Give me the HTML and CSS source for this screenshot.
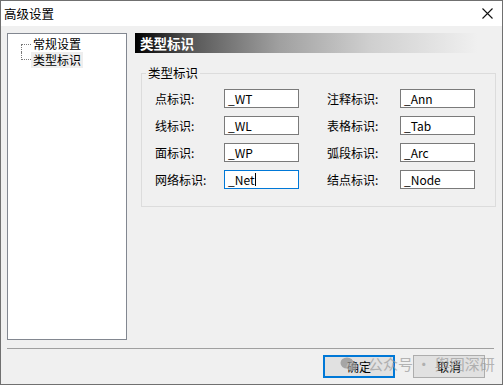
FILE: index.html
```html
<!DOCTYPE html>
<html lang="zh-CN">
<head>
    <meta charset="UTF-8">
    <meta name="viewport" content="width=device-width, initial-scale=1.0">
    <title>高级设置</title>
    <link rel="stylesheet" href="styles.css">
</head>
<body>
    <div class="window">
        <div class="titlebar">
            <span class="title">高级设置</span>
            <svg class="close" width="11" height="11" viewBox="0 0 11 11">
                <path d="M0.5 0.5 L10.5 10.5 M10.5 0.5 L0.5 10.5" stroke="#111" stroke-width="1.1" fill="none"/>
            </svg>
        </div>
        <div class="content">
            <div class="main">
                <div class="tree-panel">
                    <div class="tree">
                        <div class="tree-item">
                            <span class="branch first"></span>
                            <span class="tree-label">常规设置</span>
                        </div>
                        <div class="tree-item">
                            <span class="branch last"></span>
                            <span class="tree-label selected">类型标识</span>
                        </div>
                    </div>
                </div>
                <div class="page">
                    <div class="page-header">类型标识</div>
                    <fieldset class="group">
                        <legend>类型标识</legend>
                        <div class="fields">
                            <span class="label">点标识:</span>
                            <div class="field">_WT</div>
                            <span></span>
                            <span class="label">注释标识:</span>
                            <div class="field">_Ann</div>

                            <span class="label">线标识:</span>
                            <div class="field">_WL</div>
                            <span></span>
                            <span class="label">表格标识:</span>
                            <div class="field">_Tab</div>

                            <span class="label">面标识:</span>
                            <div class="field">_WP</div>
                            <span></span>
                            <span class="label">弧段标识:</span>
                            <div class="field">_Arc</div>

                            <span class="label">网络标识:</span>
                            <div class="field focused">_Net<span class="caret"></span></div>
                            <span></span>
                            <span class="label">结点标识:</span>
                            <div class="field">_Node</div>
                        </div>
                    </fieldset>
                </div>
            </div>
            <div class="separator"></div>
            <div class="buttons">
                <button class="btn default">确定</button>
                <button class="btn">取消</button>
            </div>
        </div>
        <!-- watermark over the buttons -->
        <div class="watermark">
            <svg width="18" height="15" viewBox="0 0 18 15">
                <ellipse cx="7" cy="6" rx="6.5" ry="5.5" fill="#8c8c8c"/>
                <ellipse cx="12" cy="9.5" rx="5.5" ry="4.5" fill="#a8a8a8"/>
            </svg>
            <span>公众号 · 舆图深研</span>
        </div>
    </div>
</body>
</html>
```

FILE: styles.css
```css
* {
    box-sizing: border-box;
}

body {
    margin: 0;
    font-family: "Noto Sans CJK SC", "Noto Sans", sans-serif;
    font-size: 12px;
    color: #000;
    background: #f0f0f0;
}

.window {
    position: relative;
    width: 503px;
    height: 385px;
    border: 1px solid #707070;
    display: flex;
    flex-direction: column;
    overflow: hidden;
}

.titlebar {
    height: 25px;
    background: #fff;
    display: flex;
    align-items: center;
    justify-content: space-between;
    padding: 0 9px 0 3px;
}

.title {
    font-size: 12.5px;
    line-height: 16px;
}

.close {
    display: block;
}

.content {
    flex: 1;
    background: #f0f0f0;
    padding: 7px 6px 0 6px;
    display: flex;
    flex-direction: column;
}

.main {
    display: flex;
    gap: 8px;
    height: 307px;
}

.tree-panel {
    width: 120px;
    background: #fff;
    border: 1px solid #828790;
}

.tree {
    padding: 2px 0 0 13px;
}

.tree-item {
    display: flex;
    height: 16px;
    align-items: center;
}

.branch {
    width: 10px;
    height: 8px;
    border-left: 1px dotted #7a7a7a;
}

.branch.first {
    align-self: flex-end;
    border-top: 1px dotted #7a7a7a;
}

.branch.last {
    align-self: flex-start;
    border-bottom: 1px dotted #7a7a7a;
}

.tree-label {
    padding: 0 2px;
    line-height: 16px;
}

.tree-label.selected {
    background: #eeeeee;
}

.page {
    flex: 1;
    display: flex;
    flex-direction: column;
}

.page-header {
    height: 20px;
    line-height: 20px;
    padding-left: 5px;
    color: #fff;
    font-weight: bold;
    font-size: 13.5px;
    background: linear-gradient(to right, #000 0%, #555 15%, #a0a0a0 40%, #cfcfcf 65%, #f0f0f0 95%);
}

.group {
    margin: 12px 0 0 6px;
    padding: 8px 0 17px 13px;
    border: 1px solid #dcdcdc;
    min-width: 0;
}

.group legend {
    margin-left: -9px;
    padding: 0 2px;
    line-height: 16px;
    font-size: 12.5px;
}

.fields {
    display: grid;
    grid-template-columns: 69px 75px 28px 73px 75px;
    grid-auto-rows: 19px;
    row-gap: 8px;
    align-items: center;
}

.label {
    line-height: 19px;
}

.field {
    height: 19px;
    border: 1px solid #7a7a7a;
    background: #fff;
    padding-left: 3px;
    line-height: 17px;
    font-size: 12px;
    display: flex;
    align-items: center;
}

.field.focused {
    border-color: #0078d7;
}

.caret {
    display: inline-block;
    width: 1px;
    height: 13px;
    background: #000;
    margin-left: 1px;
}

.separator {
    margin: 8px 2px 0 0;
    height: 1px;
    background: #a0a0a0;
}

.buttons {
    display: flex;
    justify-content: flex-end;
    gap: 18px;
    margin-top: 6px;
    padding-right: 11px;
}

.btn {
    width: 72px;
    height: 23px;
    background: #e1e1e1;
    border: 1px solid #adadad;
    font-family: "Noto Sans CJK SC", sans-serif;
    font-size: 12px;
    line-height: 16px;
    padding: 0;
    color: #000;
}

.btn.default {
    border: 2px solid #0078d7;
}

.watermark {
    position: absolute;
    left: 339px;
    top: 353px;
    display: flex;
    align-items: center;
    gap: 10px;
    color: #9a9a9a;
    font-size: 15px;
    line-height: 20px;
    opacity: 0.7;
    pointer-events: none;
}
```
